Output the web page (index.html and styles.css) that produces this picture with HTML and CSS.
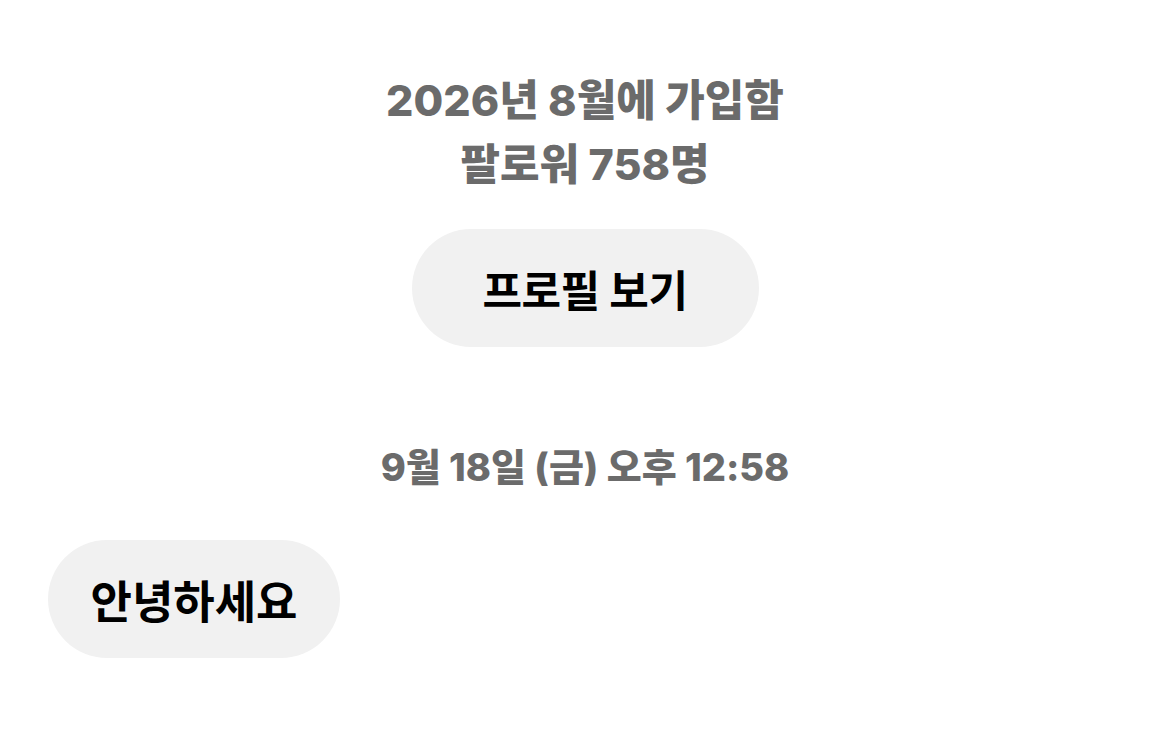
FILE: index.html
```html
<!DOCTYPE html>
<html lang="ko">
<head>
    <meta charset="UTF-8">
    <meta name="viewport" content="width=device-width, initial-scale=1.0">
    <title>메시지</title>
    <link rel="stylesheet" href="styles.css">
</head>
<body>
    <div class="chat">
        <div class="profile-info">
            <p class="info-line">2026년 8월에 가입함</p>
            <p class="info-line">팔로워 758명</p>
            <button class="profile-button">프로필 보기</button>
        </div>
        <p class="timestamp">9월 18일 (금) 오후 12:58</p>
        <div class="message-row">
            <div class="bubble">안녕하세요</div>
        </div>
    </div>
</body>
</html>
```

FILE: styles.css
```css
body {
    margin: 0;
    padding: 0;
    background-color: #fff;
    font-family: Inter, "Noto Sans CJK KR", sans-serif;
    font-weight: 700;
}
.chat {
    display: flex;
    flex-direction: column;
    padding: 68px 48px 0;
}
.profile-info {
    display: flex;
    flex-direction: column;
    align-items: center;
}
.info-line {
    margin: 0;
    font-size: 43px;
    line-height: 64px;
    font-weight: 800;
    color: #6b6b6b;
}
.profile-button {
    margin-top: 33px;
    width: 347px;
    height: 118px;
    border: none;
    border-radius: 59px;
    background-color: #f1f1f1;
    color: #000;
    font-family: inherit;
    font-weight: 700;
    font-size: 43px;
    letter-spacing: -0.5px;
    cursor: pointer;
}
.timestamp {
    margin: 95px 0 0;
    text-align: center;
    font-size: 38px;
    line-height: 50px;
    font-weight: 800;
    color: #6b6b6b;
}
.message-row {
    display: flex;
    margin-top: 48px;
}
.bubble {
    display: flex;
    align-items: center;
    justify-content: center;
    width: 292px;
    height: 118px;
    border-radius: 59px;
    background-color: #f1f1f1;
    color: #000;
    font-size: 45px;
}
```
